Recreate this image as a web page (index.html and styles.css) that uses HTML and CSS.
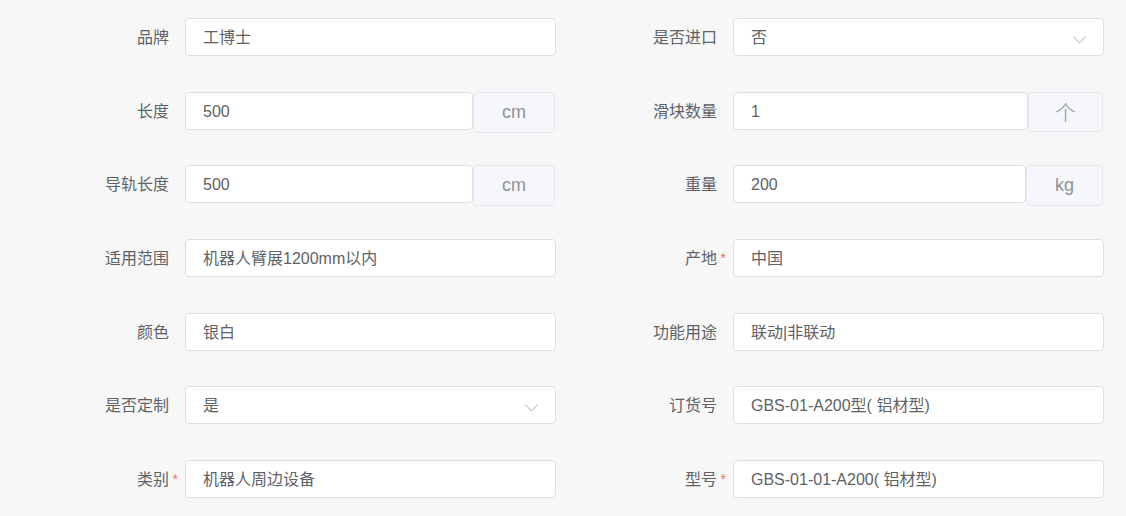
FILE: index.html
```html
<!DOCTYPE html>
<html lang="zh-CN">
<head>
  <meta charset="UTF-8" />
  <meta name="viewport" content="width=device-width, initial-scale=1.0" />
  <title>产品参数</title>
  <link rel="stylesheet" href="styles.css">
</head>
<body>
  <form class="spec-form">
    <div class="form-item">
      <label class="form-label">品牌</label>
      <div class="form-field"><div class="input">工博士</div></div>
    </div>
    <div class="form-item">
      <label class="form-label">是否进口</label>
      <div class="form-field">
        <div class="input select">否
          <svg class="arrow" viewBox="0 0 16 16"><path d="M1.5 5l6.5 6.5L14.5 5" /></svg>
        </div>
      </div>
    </div>

    <div class="form-item">
      <label class="form-label">长度</label>
      <div class="form-field group">
        <div class="input">500</div>
        <div class="addon">cm</div>
      </div>
    </div>
    <div class="form-item">
      <label class="form-label">滑块数量</label>
      <div class="form-field group">
        <div class="input">1</div>
        <div class="addon addon-cjk">个</div>
      </div>
    </div>

    <div class="form-item">
      <label class="form-label">导轨长度</label>
      <div class="form-field group">
        <div class="input">500</div>
        <div class="addon">cm</div>
      </div>
    </div>
    <div class="form-item">
      <label class="form-label">重量</label>
      <div class="form-field group">
        <div class="input">200</div>
        <div class="addon">kg</div>
      </div>
    </div>

    <div class="form-item">
      <label class="form-label">适用范围</label>
      <div class="form-field"><div class="input">机器人臂展1200mm以内</div></div>
    </div>
    <div class="form-item">
      <label class="form-label required">产地</label>
      <div class="form-field"><div class="input">中国</div></div>
    </div>

    <div class="form-item">
      <label class="form-label">颜色</label>
      <div class="form-field"><div class="input">银白</div></div>
    </div>
    <div class="form-item">
      <label class="form-label">功能用途</label>
      <div class="form-field"><div class="input">联动|非联动</div></div>
    </div>

    <div class="form-item">
      <label class="form-label">是否定制</label>
      <div class="form-field">
        <div class="input select">是
          <svg class="arrow" viewBox="0 0 16 16"><path d="M1.5 5l6.5 6.5L14.5 5" /></svg>
        </div>
      </div>
    </div>
    <div class="form-item">
      <label class="form-label">订货号</label>
      <div class="form-field"><div class="input">GBS-01-A200型( 铝材型)</div></div>
    </div>

    <div class="form-item">
      <label class="form-label required">类别</label>
      <div class="form-field"><div class="input">机器人周边设备</div></div>
    </div>
    <div class="form-item">
      <label class="form-label required">型号</label>
      <div class="form-field"><div class="input">GBS-01-01-A200( 铝材型)</div></div>
    </div>
  </form>
</body>
</html>
```

FILE: styles.css
```css
* { box-sizing: border-box; }

body {
  margin: 0;
  padding: 18px 8px 0;
  background: #f7f7f7;
  font-family: 'Liberation Sans', 'Noto Sans CJK SC', sans-serif;
  font-size: 16px;
  color: #606266;
}

.spec-form {
  width: 1096px;
  display: grid;
  grid-template-columns: 548px 548px;
  row-gap: 35.67px;
}

.form-item {
  display: flex;
  align-items: flex-start;
  height: 38px;
}

.form-label {
  position: relative;
  width: 177px;
  flex-shrink: 0;
  padding-right: 16px;
  height: 38px;
  line-height: 40px;
  text-align: right;
  color: #606266;
}

.form-label.required::after {
  content: "*";
  position: absolute;
  right: 7px;
  top: -1px;
  font-size: 14px;
  color: #f56c6c;
}

.form-field {
  width: 371px;
}

.form-field.group {
  display: flex;
  align-items: flex-start;
}

.input {
  position: relative;
  height: 38px;
  line-height: 37px;
  padding: 0 17px;
  background: #fff;
  border: 1px solid #dcdfe6;
  border-radius: 4px;
  color: #606266;
  white-space: nowrap;
}

.group .input {
  flex: 1;
}

.addon {
  height: 41px;
  line-height: 39px;
  padding: 0 28px;
  margin-right: 1px;
  background: #f5f7fa;
  border: 1px solid #e4e7ed;
  border-radius: 4px;
  font-size: 18px;
  color: #909399;
  white-space: nowrap;
}

.addon-cjk {
  height: 40px;
  padding: 0 26px;
  font-size: 21px;
  font-weight: 300;
}

.select .arrow {
  position: absolute;
  right: 16px;
  top: 13px;
  width: 15px;
  height: 15px;
  fill: none;
  stroke: #c0c4cc;
  stroke-width: 1.2;
}
```
